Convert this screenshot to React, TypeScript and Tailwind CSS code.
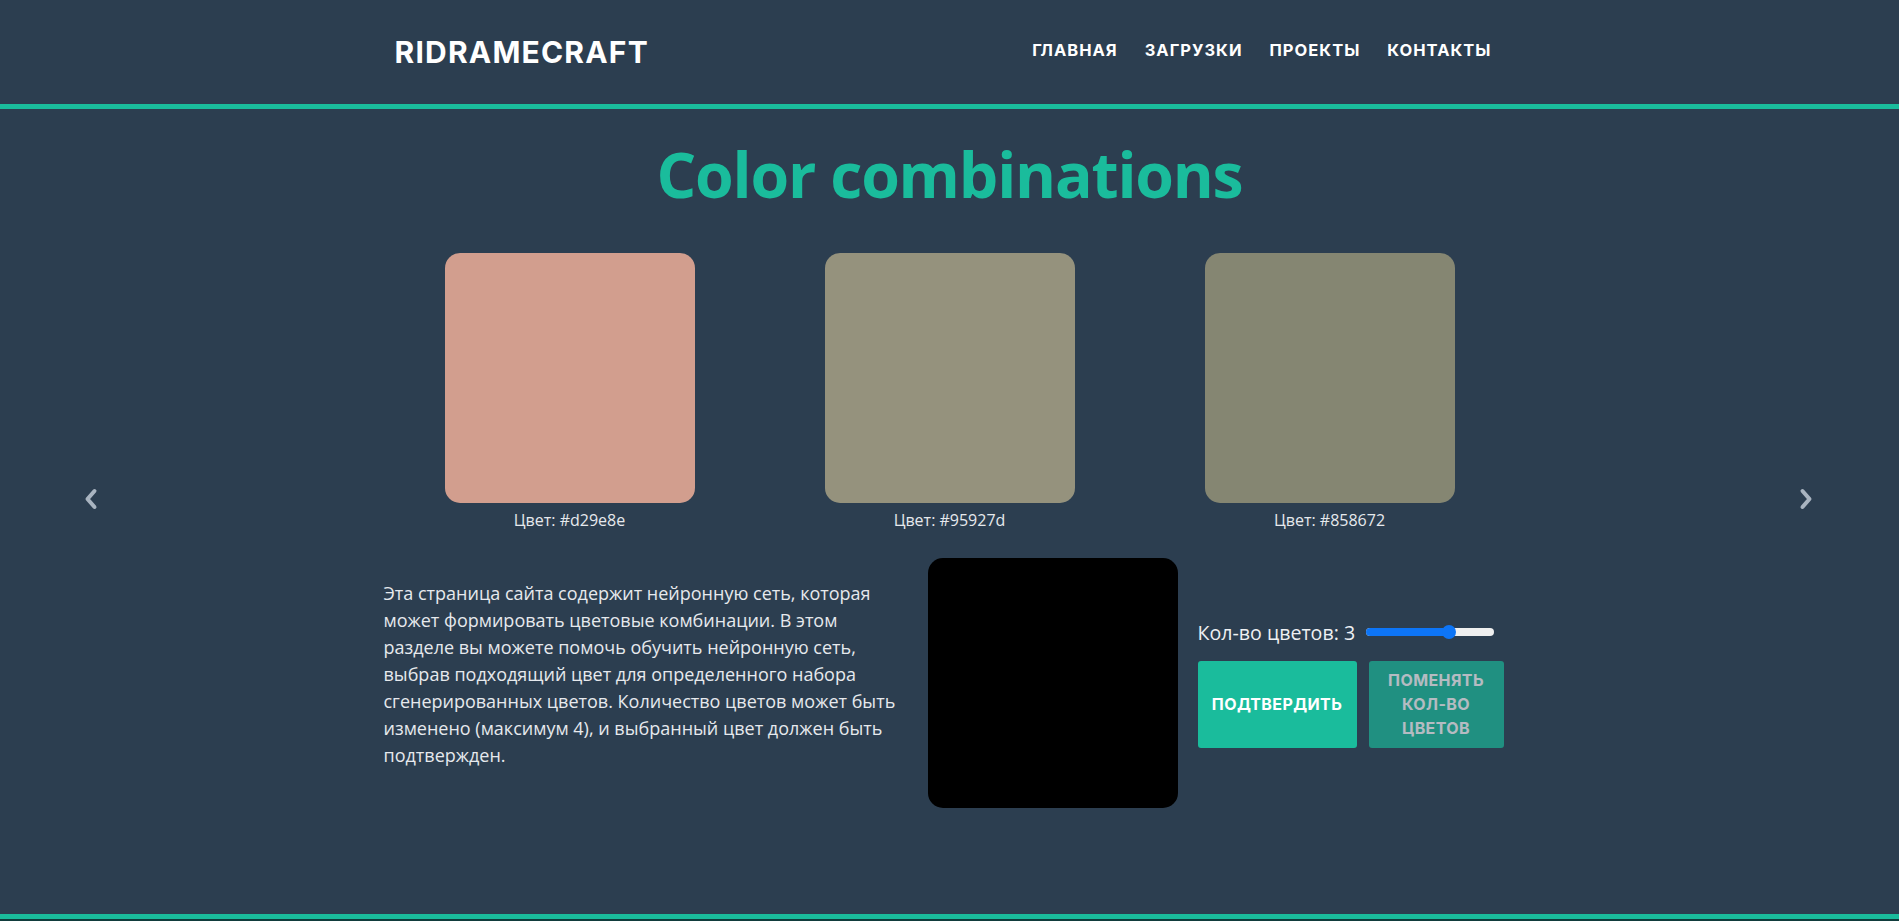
import React from 'react';

const SWATCHES = ['#d29e8e', '#95927d', '#858672'];

const NAV = ['ГЛАВНАЯ', 'ЗАГРУЗКИ', 'ПРОЕКТЫ', 'КОНТАКТЫ'];

// line breaks as on the live page
const ABOUT = [
    'Эта страница сайта содержит нейронную сеть, которая',
    'может формировать цветовые комбинации. В этом',
    'разделе вы можете помочь обучить нейронную сеть,',
    'выбрав подходящий цвет для определенного набора',
    'сгенерированных цветов. Количество цветов может быть',
    'изменено (максимум 4), и выбранный цвет должен быть',
    'подтвержден.',
];

function Chevron({ dir }: { dir: 'left' | 'right' }) {
    return (
        <svg width="14" height="22" viewBox="0 0 14 22" fill="none">
            <path
                d={dir === 'left' ? 'M10.5 3 L3.5 11 L10.5 19' : 'M3.5 3 L10.5 11 L3.5 19'}
                stroke="#a9b4c0"
                strokeWidth="4"
                strokeLinecap="round"
                strokeLinejoin="round"
            />
        </svg>
    );
}

export default function App() {
    return (
        <div className="min-h-screen bg-[#2c3e50] font-['Open_Sans',sans-serif] overflow-hidden">
            <header className="h-[109px] border-b-[5px] border-[#1abc9c]">
                <div className="mx-auto w-[1140px] px-[15px] h-full flex items-center justify-between">
                    <a className="font-['Inter',sans-serif] text-[30px] font-bold tracking-[1.2px] text-white">
                        RIDRAMECRAFT
                    </a>
                    <ul className="flex items-center gap-[27px] pr-[13px] mb-[4px] font-['Inter',sans-serif] text-[16.5px] font-bold tracking-[1px] text-white">
                        {NAV.map(item => (
                            <li key={item}>{item}</li>
                        ))}
                    </ul>
                </div>
            </header>

            <main className="h-[805px]">
                <h1 className="pt-[25px] text-center text-[62.5px] leading-[79px] font-bold tracking-[-1.2px] text-[#1abc9c]">
                    Color combinations
                </h1>

                <div className="relative mt-[40px]">
                    <button className="absolute left-[84px] top-[235px]">
                        <Chevron dir="left" />
                    </button>
                    <button className="absolute right-[86px] top-[235px]">
                        <Chevron dir="right" />
                    </button>

                    <div className="mx-auto w-[1140px] grid grid-cols-3">
                        {SWATCHES.map(c => (
                            <div key={c} className="flex flex-col items-center">
                                <div className="w-[250px] h-[250px] rounded-[15px]" style={{ backgroundColor: c }} />
                                <span className="mt-[5px] text-[16px] leading-6 text-[#e6e9ed]">Цвет: {c}</span>
                            </div>
                        ))}
                    </div>

                    <div className="mx-auto w-[1140px] mt-[26px] flex items-center">
                        <p className="ml-[4px] mb-[18px] w-[523px] shrink-0 text-[18px] leading-[27px] text-[#e6e9ed] whitespace-nowrap">
                            {ABOUT.map((line, i) => (
                                <React.Fragment key={i}>
                                    {line}
                                    {i < ABOUT.length - 1 && <br />}
                                </React.Fragment>
                            ))}
                        </p>

                        <div className="ml-[21px] w-[250px] h-[250px] shrink-0 rounded-[15px] bg-black" />

                        <div className="ml-[20px] flex flex-col gap-[15px]">
                            <div className="flex items-center gap-[11px]">
                                <span className="text-[19.6px] leading-[27px] text-[#eef0f3]">Кол-во цветов: 3</span>
                                <div className="relative w-[128px] h-[8px] rounded-full bg-[#efefef]">
                                    <div className="h-full w-[84px] rounded-full bg-[#0d75f7]" />
                                    <div className="absolute left-[76px] top-[-3px] w-[14px] h-[14px] rounded-full bg-[#0d75f7]" />
                                </div>
                            </div>
                            <div className="flex gap-[12px] font-['Inter',sans-serif] font-bold text-[16px] tracking-[0.4px] text-white">
                                <button className="w-[159px] h-[87px] rounded-[3px] bg-[#1abc9c]">ПОДТВЕРДИТЬ</button>
                                <button className="w-[135px] h-[87px] rounded-[3px] bg-[#1abc9c] opacity-65 leading-[24px]">
                                    ПОМЕНЯТЬ
                                    <br />
                                    КОЛ-ВО
                                    <br />
                                    ЦВЕТОВ
                                </button>
                            </div>
                        </div>
                    </div>
                </div>
            </main>

            <footer className="h-[40px] border-t-[5px] border-[#1abc9c] bg-[#113c3c]" />
        </div>
    );
}
